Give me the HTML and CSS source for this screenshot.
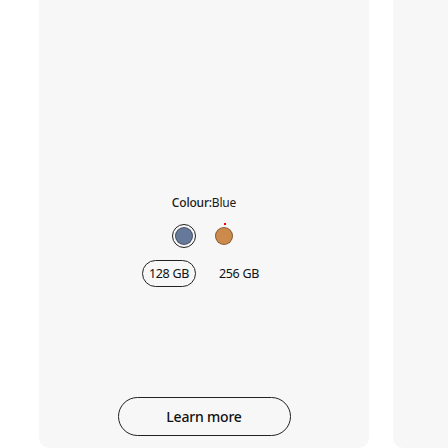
FILE: index.html
```html
<!DOCTYPE html>
<html>
<head>
<meta charset="utf-8">
<link rel="stylesheet" href="styles.css">
</head>
<body>
<div class="row">
  <div class="card">
    <div class="options">
      <div class="colour-label"><span class="label-key">Colour:</span>Blue</div>
      <div class="swatches">
        <span class="swatch selected"><span class="dot blue"></span></span>
        <span class="swatch"><span class="dot orange"></span><span class="new-mark"></span></span>
      </div>
      <div class="chips">
        <span class="chip selected">128 GB</span>
        <span class="chip">256 GB</span>
      </div>
    </div>
    <a class="learn" href="#">Learn more</a>
  </div>
  <div class="card next"></div>
</div>
</body>
</html>
```
FILE: styles.css
```css
html, body {
  margin: 0;
  padding: 0;
  background: #ffffff;
  font-family: "Noto Sans", "Open Sans", sans-serif;
  color: #111;
}
.row {
  display: flex;
  gap: 24px;
  padding-left: 39px;
  height: 448px;
  overflow: hidden;
}
.card {
  flex: 0 0 330px;
  height: 448px;
  background: #f7f7f7;
  border-radius: 0 0 10px 10px;
  display: flex;
  flex-direction: column;
  align-items: center;
  padding-top: 194px;
  padding-bottom: 12px;
  box-sizing: border-box;
}
.options {
  display: flex;
  flex-direction: column;
  align-items: center;
}
.colour-label {
  font-size: 12px;
  line-height: 17px;
  color: #1a1a1a;
  letter-spacing: -0.2px;
}
.label-key {
  font-weight: 500;
}
.swatches {
  display: flex;
  gap: 16px;
  margin-top: 13px;
}
.swatch {
  position: relative;
  width: 24px;
  height: 24px;
  border-radius: 50%;
  display: flex;
  align-items: center;
  justify-content: center;
  box-sizing: border-box;
}
.swatch.selected {
  border: 1px solid #222;
}
.dot {
  width: 18px;
  height: 18px;
  border-radius: 50%;
  box-sizing: border-box;
  border: 1px solid rgba(0,0,0,0.35);
}
.dot.blue { background: #66799a; }
.dot.orange { background: #cc8b4d; }
.new-mark {
  position: absolute;
  top: -1px;
  left: 12px;
  width: 2px;
  height: 2px;
  background: #ff0000;
}
.chips {
  display: flex;
  gap: 16px;
  margin-top: 12px;
}
.chip {
  width: 54px;
  height: 27px;
  box-sizing: border-box;
  border-radius: 14px;
  border: 1px solid transparent;
  display: flex;
  align-items: center;
  justify-content: center;
  font-size: 12.5px;
  letter-spacing: -0.3px;
  color: #111;
}
.chip.selected {
  border-color: #222;
}
.learn {
  margin-top: auto;
  width: 173px;
  height: 39px;
  box-sizing: border-box;
  border: 1.3px solid #222;
  border-radius: 20px;
  display: flex;
  align-items: center;
  justify-content: center;
  font-size: 14px;
  font-weight: 500;
  letter-spacing: -0.2px;
  color: #111;
  text-decoration: none;
}
```
